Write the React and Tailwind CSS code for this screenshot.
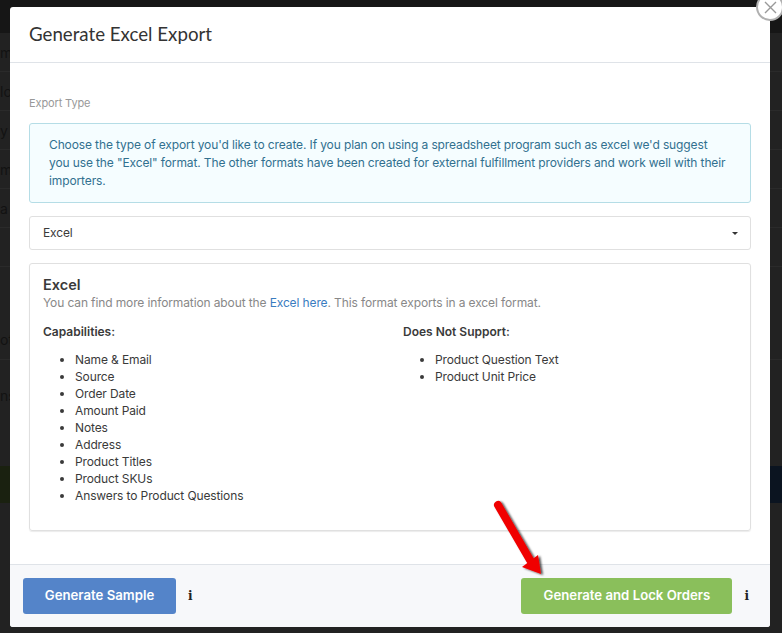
const capabilities = [
  "Name & Email",
  "Source",
  "Order Date",
  "Amount Paid",
  "Notes",
  "Address",
  "Product Titles",
  "Product SKUs",
  "Answers to Product Questions",
];
const unsupported = ["Product Question Text", "Product Unit Price"];

// table rows of the page behind the overlay
const bgRows = ["m", "lo", "y", "m", "a", ""];

const App = () => {
  return (
    <div className="relative h-[633px] w-[782px] overflow-hidden bg-[#222222] font-['Inter',sans-serif]">
      <div className="h-[33px] bg-[#161616]" />
      <div className="overflow-hidden text-[14px] text-[#121212]">
        {bgRows.map((text, i) => (
          <div key={i} className="flex h-[39px] items-center border-b border-[#2a2a2a]">
            {text}
          </div>
        ))}
        <div className="flex h-[93px] items-end border-b border-[#2a2a2a] pb-[9px]">ot</div>
        <div className="flex h-[46px] items-end">ns</div>
        <div className="mt-[60px] flex h-[37px]">
          <div className="w-1/2 bg-[#1a2110]" />
          <div className="w-1/2 bg-[#0b1420]" />
        </div>
      </div>

      <div className="absolute left-[10px] top-[7px] flex h-[620px] w-[760px] flex-col rounded-[3px] bg-white text-[#3a3a3a]">
        <div className="flex h-[56px] items-center border-b border-[#dfe3e8] px-[19px] font-['Lato',sans-serif] text-[18.7px] text-[#333]">
          Generate Excel Export
        </div>

        <div className="flex-1 px-[19px] text-[12px] tracking-[-0.12px]">
          <div className="mt-[33px] text-[11px] leading-[14px] text-[#999]">Export Type</div>
          <div className="mt-[13px] h-[80px] rounded-[3px] border border-[#b5dde6] bg-[#f5fdff] px-[19px] pt-[12px] leading-[18px] text-[#31708f]">
            Choose the type of export you'd like to create. If you plan on using a spreadsheet program such as excel we'd suggest you use the "Excel" format. The other formats have been created for external fulfillment providers and work well with their importers.
          </div>
          <div className="mt-[13px] flex h-[34px] items-center justify-between rounded-[3px] border border-[#e0e0e0] pl-[13px] pr-[12px]">
            <span>Excel</span>
            <span className="h-0 w-0 border-x-[3px] border-t-[3px] border-x-transparent border-t-[#333]" />
          </div>
          <div className="mt-[13px] h-[268px] rounded-[3px] border border-[#e0e0e0] px-[13px] pt-[13px] shadow-[0_1px_1px_rgba(0,0,0,0.08)]">
            <div className="text-[14.5px] font-semibold leading-[16px] tracking-normal">Excel</div>
            <div className="mt-[2px] leading-[16px] text-[#888]">
              You can find more information about the <span className="text-[#3a7cc0]">Excel here</span>. This format exports in a excel format.
            </div>
            <div className="mt-[12px] grid grid-cols-[360px_1fr]">
              <div>
                <div className="font-semibold leading-[17px] tracking-normal">Capabilities:</div>
                <ul className="mt-[11px] list-disc pl-[32px] leading-[17px]">
                  {capabilities.map((item) => (
                    <li key={item}>{item}</li>
                  ))}
                </ul>
              </div>
              <div>
                <div className="font-semibold leading-[17px] tracking-normal">Does Not Support:</div>
                <ul className="mt-[11px] list-disc pl-[32px] leading-[17px]">
                  {unsupported.map((item) => (
                    <li key={item}>{item}</li>
                  ))}
                </ul>
              </div>
            </div>
          </div>
        </div>

        <div className="flex h-[63px] items-center justify-between rounded-b-[3px] border-t border-[#dfe3e8] bg-[#f7f8fa] pl-[13px] pr-[21px]">
          <div className="flex items-center gap-[12px]">
            <button className="h-[36px] w-[153px] rounded-[3px] bg-[#5484c9] text-[13.2px] font-semibold text-white">
              Generate Sample
            </button>
            <span className="font-['DejaVu_Serif',serif] text-[12px] font-bold leading-none text-[#222]">i</span>
          </div>
          <div className="flex items-center gap-[12px]">
            <button className="h-[36px] w-[211px] rounded-[3px] bg-[#8abf5b] text-[13.2px] font-semibold text-white">
              Generate and Lock Orders
            </button>
            <span className="font-['DejaVu_Serif',serif] text-[12px] font-bold leading-none text-[#222]">i</span>
          </div>
        </div>
      </div>

      {/* close button */}
      <div className="absolute left-[756px] top-[-7px] flex h-[28px] w-[28px] items-center justify-center rounded-full border-2 border-[#b0b0b0] bg-white">
        <svg width="13" height="13" viewBox="0 0 13 13" stroke="#999" strokeWidth="1.4">
          <path d="M1 1l11 11M12 1L1 12" />
        </svg>
      </div>

      {/* red annotation arrow */}
      <svg className="absolute left-[485px] top-[495px]" width="70" height="90" viewBox="0 0 70 90">
        <defs>
          <filter id="arrowShadow" x="-30%" y="-30%" width="160%" height="160%">
            <feDropShadow dx="2" dy="1" stdDeviation="1.3" floodColor="#000" floodOpacity="0.7" />
          </filter>
        </defs>
        <g filter="url(#arrowShadow)" fill="#f00000">
          <path d="M13 10 L45 65" stroke="#f00000" strokeWidth="8" strokeLinecap="round" />
          <path d="M37 72 L56 79 L53 60 Z" />
        </g>
      </svg>
    </div>
  );
};

export default App;
